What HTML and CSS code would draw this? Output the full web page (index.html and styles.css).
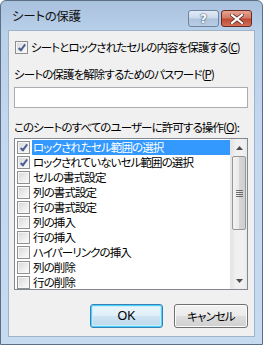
FILE: index.html
```html
<!DOCTYPE html>
<html lang="ja">
<head>
<meta charset="utf-8">
<link rel="stylesheet" href="styles.css">
</head>
<body>
<div class="window">
  <div class="titlebar">
    <span class="title">シートの保護</span>
    <div class="caption-buttons">
      <div class="cap help">?</div>
      <div class="cap close">
        <svg width="14" height="10" viewBox="0 0 14 10"><path d="M2 1 L12 9 M12 1 L2 9" stroke="#5a2a2a" stroke-width="3.6" stroke-linecap="square"/><path d="M2 1 L12 9 M12 1 L2 9" stroke="#fff" stroke-width="2.2" stroke-linecap="square"/></svg>
      </div>
    </div>
  </div>
  <div class="client">
    <div class="check-row">
      <span class="cb checked"></span>
      <span class="txt">シートとロックされたセルの内容を保護する(<u>C</u>)</span>
    </div>
    <div class="label pw-label">シートの保護を解除するためのパスワード(<u>P</u>)</div>
    <div class="input"></div>
    <div class="label ops-label">このシートのすべてのユーザーに許可する操作(<u>O</u>):</div>
    <div class="list">
      <div class="items">
        <div class="item sel"><span class="cb checked"></span><span class="it">ロックされたセル範囲の選択</span></div>
        <div class="item"><span class="cb checked"></span><span class="it">ロックされていないセル範囲の選択</span></div>
        <div class="item"><span class="cb"></span><span class="it">セルの書式設定</span></div>
        <div class="item"><span class="cb"></span><span class="it">列の書式設定</span></div>
        <div class="item"><span class="cb"></span><span class="it">行の書式設定</span></div>
        <div class="item"><span class="cb"></span><span class="it">列の挿入</span></div>
        <div class="item"><span class="cb"></span><span class="it">行の挿入</span></div>
        <div class="item"><span class="cb"></span><span class="it">ハイパーリンクの挿入</span></div>
        <div class="item"><span class="cb"></span><span class="it">列の削除</span></div>
        <div class="item"><span class="cb"></span><span class="it">行の削除</span></div>
      </div>
      <div class="scrollbar">
        <div class="arrow"><svg width="7" height="4" viewBox="0 0 7 4"><path d="M3.5 0 L7 4 L0 4 Z" fill="#4d4d4d"/></svg></div>
        <div class="track">
          <div class="thumb"><span class="grip"></span></div>
        </div>
        <div class="arrow"><svg width="7" height="4" viewBox="0 0 7 4"><path d="M0 0 L7 0 L3.5 4 Z" fill="#4d4d4d"/></svg></div>
      </div>
    </div>
    <div class="buttons">
      <div class="btn default"><span>OK</span></div>
      <div class="btn">キャンセル</div>
    </div>
  </div>
</div>
</body>
</html>
```
FILE: styles.css
```css
* { box-sizing: border-box; }
html, body { margin: 0; padding: 0; }
body {
  width: 263px; height: 345px; overflow: hidden;
  background: #ffffff;
  font-family: "Noto Sans CJK JP", "Noto Sans", sans-serif;
  font-size: 11.5px;
  letter-spacing: -0.9px;
  color: #000;
  font-feature-settings: "palt";
  white-space: nowrap;
}
u { text-decoration: underline; text-underline-offset: 1px; }
.window {
  width: 263px; height: 345px;
  border: 1px solid #5d6f87;
  border-radius: 6px 6px 0 0;
  background: linear-gradient(180deg, #a8c1dd 0px, #b9d0e9 30px, #c3d7ee 120px, #c6daf0 345px);
  padding: 0 7px 7px 7px;
  display: flex; flex-direction: column;
}
.titlebar {
  height: 29px;
  display: flex; justify-content: space-between; align-items: flex-start;
}
.title {
  padding: 7px 0 0 4px;
  line-height: 16px;
  font-size: 12.5px;
  letter-spacing: -0.3px;
  color: #111;
}
.caption-buttons { display: flex; gap: 2px; margin-top: 9px; margin-right: 3px; }
.cap {
  height: 17px; border-radius: 3px;
  display: flex; align-items: center; justify-content: center;
}
.help {
  width: 31px;
  border: 1px solid #6d83a1;
  background: linear-gradient(180deg, #e3ecf6 0%, #c9d8ea 48%, #aec3dc 52%, #b9cde5 100%);
  color: #fff; font-family: "DejaVu Sans", sans-serif; font-weight: bold; font-size: 12px; letter-spacing: 0;
  text-shadow: 0 0 2px #34486a, 0 0 1px #34486a;
}
.close {
  width: 31px;
  border: 1px solid #6a2a24;
  background: linear-gradient(180deg, #e8a593 0%, #d27a66 45%, #c04a33 55%, #d0705a 100%);
}
.client {
  flex: 1;
  background: #f0f0f0;
  border: 1px solid #9fb3cb;
  padding: 10px 6px 0 5px;
  display: flex; flex-direction: column;
}
.cb {
  width: 13px; height: 13px; flex: none;
  border: 1px solid #8e8f8f;
  background: linear-gradient(135deg, #d6d6d6 0%, #eeeeee 60%, #fbfbfb 100%);
  box-shadow: inset 0 0 0 1px #f6f6f6;
  position: relative;
}
.cb.checked::after {
  content: "";
  position: absolute; left: 4px; top: 1px;
  width: 2px; height: 6px;
  border-right: 2px solid #4a5f97;
  border-bottom: 2px solid #4a5f97;
  transform: rotate(38deg);
}
.check-row { display: flex; align-items: center; height: 13px; margin-left: 1px; }
.check-row .txt { margin-left: 3px; line-height: 13px; }
.label { line-height: 14px; }
.pw-label { margin-top: 13px; }
.input {
  margin-top: 6px;
  width: 234px; height: 21px;
  background: #fff;
  border: 1px solid #abadb3;
}
.ops-label { margin-top: 12px; }
.list {
  margin-top: 4px;
  width: 234px; height: 152px;
  background: #fff;
  border: 1px solid #828790;
  display: flex;
  overflow: hidden;
}
.items { flex: 1; padding-top: 1px; padding-left: 2px; overflow: hidden; }
.item { display: flex; align-items: center; height: 15px; }
.item .cb { margin-right: 2px; }
.item .it { flex: 1; line-height: 15px; padding-left: 1px; }
.item.sel .it { background: #3399ff; color: #fff; }
.scrollbar {
  width: 17px; flex: none;
  display: flex; flex-direction: column;
  background: linear-gradient(90deg, #e3e3e3, #f0f0f0 30%, #f0f0f0 80%, #e8e8e8);
  border-left: 1px solid #e6e6e6;
}
.arrow { height: 17px; display: flex; align-items: center; justify-content: center; }
.track { flex: 1; }
.thumb {
  margin: 0 1px;
  height: 74px;
  border: 1px solid #979797;
  border-radius: 2px;
  background: linear-gradient(90deg, #f3f3f3 0%, #e9e9e9 50%, #d6d6d6 52%, #cfcfcf 100%);
  display: flex; align-items: center; justify-content: center;
}
.grip {
  width: 7px; height: 7px;
  background: repeating-linear-gradient(180deg, #4f4f4f 0 1px, transparent 1px 2px);
  opacity: 0.8;
}
.buttons {
  margin-top: 14px;
  display: flex; justify-content: flex-end; gap: 11px;
}
.btn {
  width: 74px; height: 24px;
  border: 1px solid #707070;
  border-radius: 3px;
  background: linear-gradient(180deg, #f2f2f2 0%, #ebebeb 48%, #dddddd 52%, #cfcfcf 100%);
  box-shadow: inset 0 0 0 1px #fcfcfc;
  display: flex; align-items: center; justify-content: center;
  line-height: 14px;
}
.btn.default {
  width: 73px;
  border-color: #3c7fb1;
  box-shadow: inset 0 0 0 1px #48d3ff, inset 0 0 0 2px #c9ecfb;
  background: linear-gradient(180deg, #eaf6fd 0%, #e1eff8 48%, #cde4f3 52%, #bdd8ec 100%);
}
.btn.default span { font-family: "Liberation Sans", sans-serif; font-size: 12.5px; letter-spacing: 0; }
```
